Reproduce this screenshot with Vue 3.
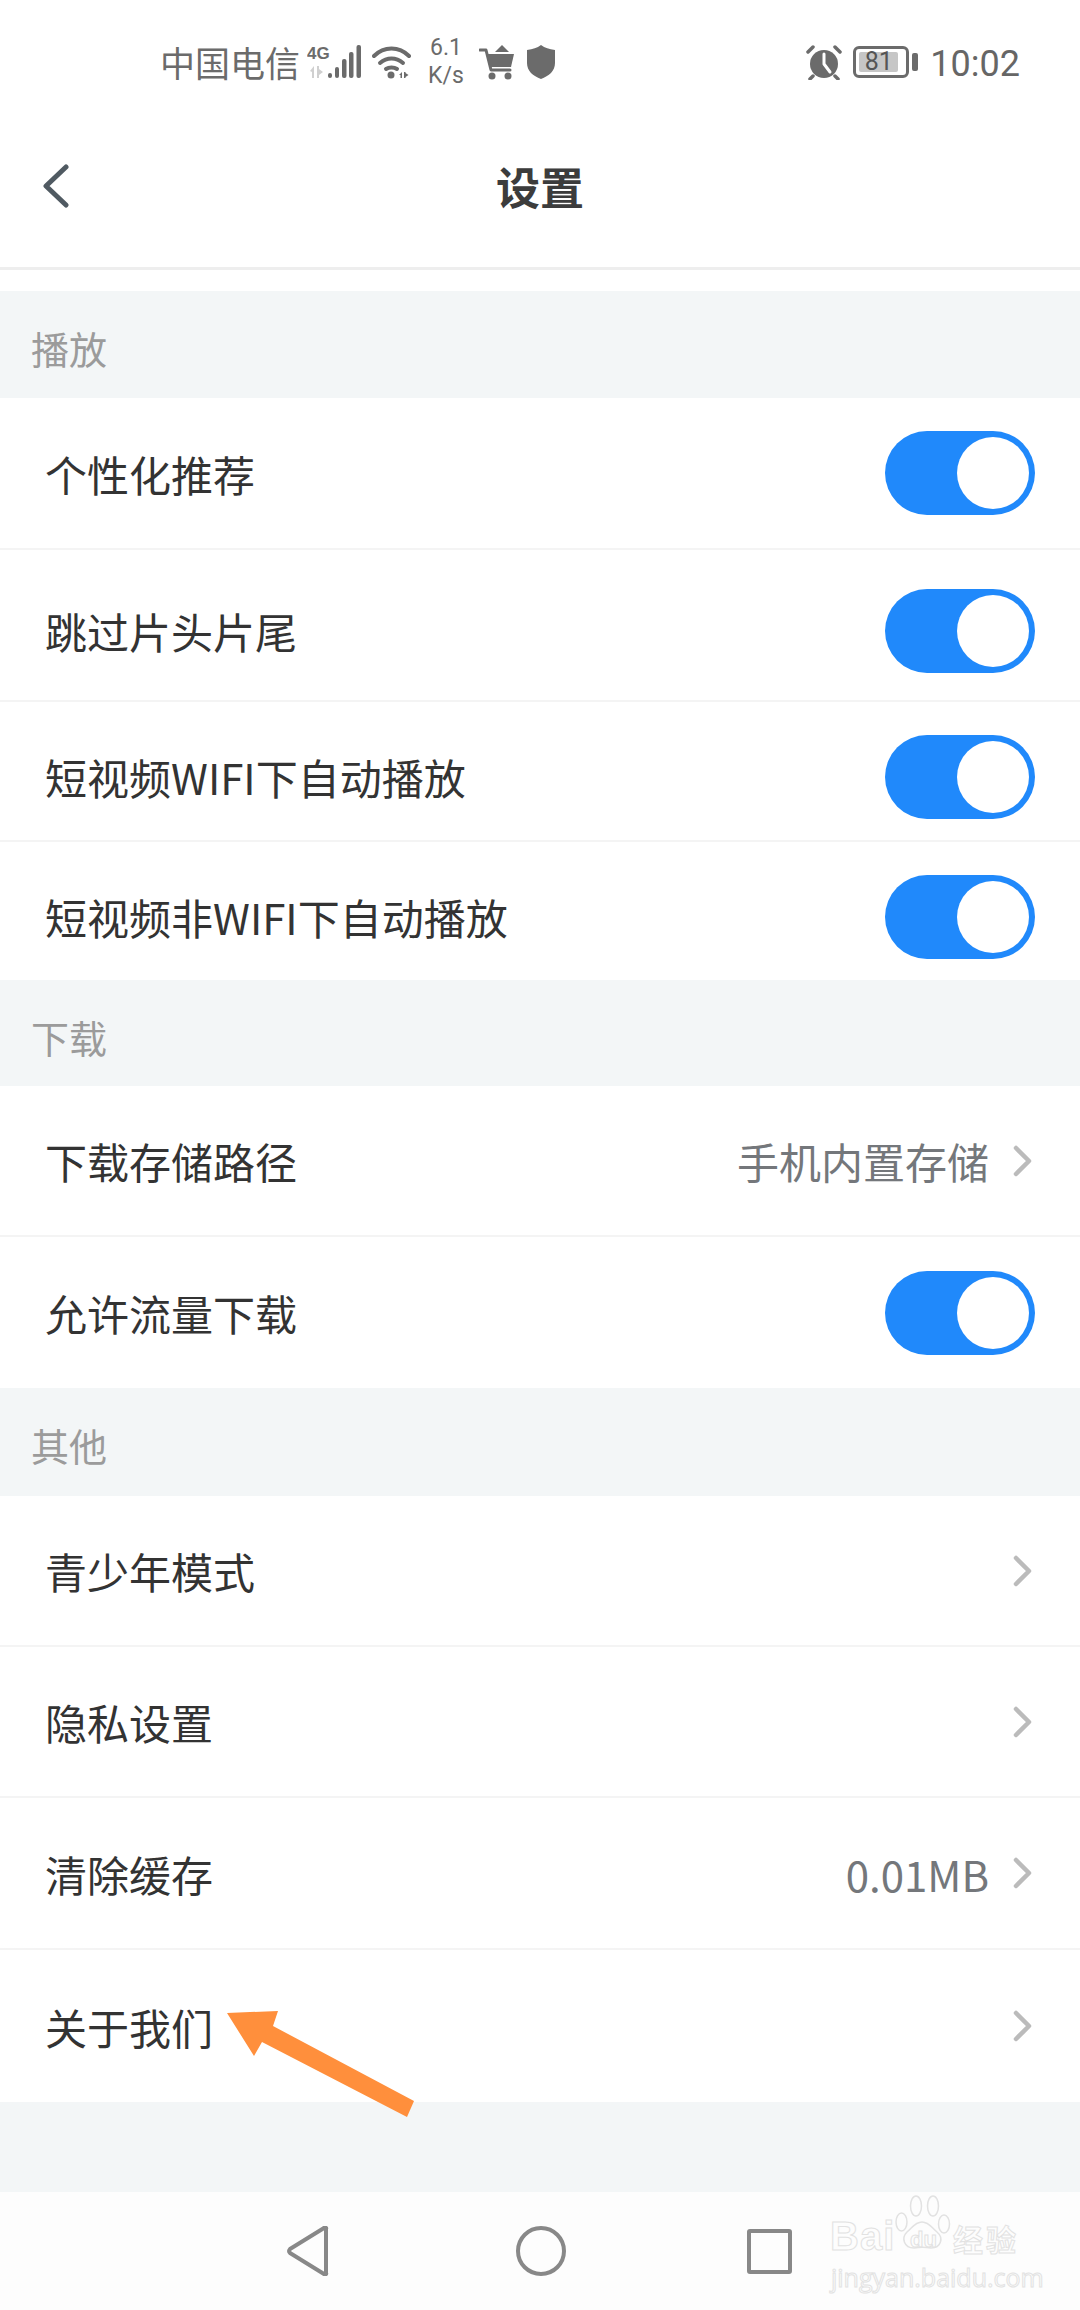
<script setup>
const sections = [
  {
    title: '播放',
    h: 107,
    rows: [
      { label: '个性化推荐', toggle: true, h: 152 },
      { label: '跳过片头片尾', toggle: true, h: 152, low: true },
      { label: '短视频WIFI下自动播放', toggle: true, h: 140, low: true },
      { label: '短视频非WIFI下自动播放', toggle: true, h: 138, low: true, last: true },
    ],
  },
  {
    title: '下载',
    h: 106,
    rows: [
      { label: '下载存储路径', value: '手机内置存储', h: 151 },
      { label: '允许流量下载', toggle: true, h: 151, last: true },
    ],
  },
  {
    title: '其他',
    h: 108,
    rows: [
      { label: '青少年模式', h: 151 },
      { label: '隐私设置', h: 151 },
      { label: '清除缓存', value: '0.01MB', h: 152 },
      { label: '关于我们', h: 152, last: true },
    ],
  },
]
</script>

<template>
  <div class="page">
    <div class="status">
      <span class="carrier">中国电信</span>
      <svg class="sig" width="56" height="36" viewBox="0 0 56 36">
        <text x="0" y="15" class="g4">4G</text>
        <path d="M3 27l4-5v12H5v-6zM10 22h2v12h-2zM12 25l4 3-4 3z" fill="#d0d0d0" />
        <rect x="21" y="29" width="4" height="5" rx="2" fill="#6b6b6b" />
        <rect x="28" y="23" width="4" height="11" rx="2" fill="#6b6b6b" />
        <rect x="35" y="15" width="4.5" height="19" rx="2" fill="#6b6b6b" />
        <rect x="42" y="8" width="4.5" height="26" rx="2" fill="#6b6b6b" />
        <rect x="49.500" y="1" width="4.500" height="33" rx="2" fill="#6b6b6b" />
      </svg>
      <svg class="wifi" width="40" height="34" viewBox="0 0 40 34">
        <g fill="none" stroke="#6b6b6b" stroke-width="4" stroke-linecap="round">
          <path d="M2 11C12 1 27 1 37 11" />
          <path d="M8 18c7-6 16-6 23 0" />
          <path d="M14 24c3-2 8-2 11 0" />
        </g>
        <circle cx="19" cy="30" r="3.500" fill="#6b6b6b" />
        <path d="M27 30l3-3v6h-1.500v-3zM32 27h1.500v6H32zM33.500 28l3 2-3 2z" fill="#6b6b6b" />
      </svg>
      <div class="speed"><span>6.1</span><span>K/s</span></div>
      <svg class="cart" width="36" height="36" viewBox="0 0 36 36">
        <path d="M1 6h6l5 20h19" fill="none" stroke="#6b6b6b" stroke-width="3" stroke-linecap="round" stroke-linejoin="round" />
        <path d="M8 10h27l-3 13H11z" fill="#6b6b6b" />
        <path d="M16 8l7-7 7 7z" fill="#6b6b6b" />
        <circle cx="13" cy="32" r="3.500" fill="#6b6b6b" />
        <circle cx="29" cy="32" r="3.500" fill="#6b6b6b" />
      </svg>
      <svg class="shield" width="28" height="34" viewBox="0 0 28 34">
        <path d="M14 0c4 3 8 4 14 5v13c0 8-6 13-14 16C6 31 0 26 0 18V5c6-1 10-2 14-5z" fill="#6b6b6b" />
      </svg>
      <div class="status-right">
        <svg width="38" height="36" viewBox="0 0 38 36">
          <circle cx="19" cy="20" r="14" fill="#6b6b6b" />
          <path d="M19 10v10l6 8" fill="none" stroke="#fff" stroke-width="3" stroke-linecap="round" stroke-linejoin="round" />
          <path d="M3 8l5-5M35 8l-5-5M8 32l-3 3M30 32l3 3" stroke="#6b6b6b" stroke-width="3.500" stroke-linecap="round" />
        </svg>
        <div class="battery">
          <div class="battery-fill">81</div>
        </div>
        <div class="battery-nub"></div>
        <span class="time">10:02</span>
      </div>
    </div>

    <div class="nav">
      <svg class="back" width="28" height="44" viewBox="0 0 28 44">
        <path d="M24 3L4 22l20 19" fill="none" stroke="#505a62" stroke-width="5" stroke-linecap="round" stroke-linejoin="round" />
      </svg>
      <span class="title">设置</span>
    </div>

    <div class="gap"></div>

    <template v-for="sec in sections" :key="sec.title">
      <div class="section-title" :style="{ height: sec.h + 'px' }">{{ sec.title }}</div>
      <div
        v-for="row in sec.rows"
        :key="row.label"
        class="row"
        :class="{ low: row.low, last: row.last }"
        :style="{ height: row.h + 'px' }"
      >
        <span class="label">{{ row.label }}</span>
        <div v-if="row.toggle" class="toggle"><div class="knob"></div></div>
        <div v-else class="right">
          <span v-if="row.value" class="value">{{ row.value }}</span>
          <svg class="chev" width="19" height="32" viewBox="0 0 19 32">
            <path d="M3 3l13 13L3 29" fill="none" stroke="#bbbbbb" stroke-width="4.500" stroke-linecap="round" stroke-linejoin="round" />
          </svg>
        </div>
      </div>
    </template>

    <div class="footer-space"></div>

    <div class="softkeys">
      <svg class="key-back" width="43" height="50" viewBox="0 0 43 50">
        <path d="M39 3v44a1 1 0 0 1-2 1L3 27a3 3 0 0 1 0-4L37 2a1 1 0 0 1 2 1z" fill="none" stroke="#888" stroke-width="4" stroke-linejoin="round" />
      </svg>
      <div class="key-home"></div>
      <div class="key-recent"></div>
    </div>

    <div class="watermark">
      <span class="wm-bai">Bai</span>
      <svg class="paw" width="58" height="58" viewBox="0 0 58 58">
        <g fill="none" stroke="#e2e2e2" stroke-width="1.500">
          <ellipse cx="6.500" cy="28" rx="5.500" ry="9" />
          <ellipse cx="21" cy="12" rx="5.500" ry="10" />
          <ellipse cx="38" cy="12" rx="5.500" ry="10" />
          <ellipse cx="49" cy="30" rx="5.500" ry="9" />
          <path d="M27 28c7 0 10 6 15 10 7 6 4 16-6 16-6-1-11-1-17 0-10 0-13-10-7-16 5-4 8-10 15-10z" />
        </g>
      </svg>
      <span class="wm-du">du</span>
      <span class="wm-cn">经验</span>
      <div class="wm-url">jingyan.baidu.com</div>
    </div>

    <svg class="arrow" width="440" height="130" viewBox="0 0 440 130">
      <path d="M0 15L51 13L46 28L187 103L180 119L35 44L27 58Z" fill="#ff8f3c" />
    </svg>
  </div>
</template>

<style scoped>
.page {
  position: relative;
  width: 1080px;
  height: 2310px;
  overflow: hidden;
  background: #fff;
  font-family: "Noto Sans CJK SC", "Noto Sans", sans-serif;
  color: #333;
}

.status {
  display: flex;
  align-items: center;
  height: 124px;
  padding-left: 160px;
  padding-right: 60px;
  color: #6b6b6b;
  box-sizing: border-box;
}
.carrier {
  margin-bottom: 2px;
  font-size: 35px;
  width: 140px;
  white-space: nowrap;
}
.sig {
  margin-left: 7px;
}
.g4 {
  font-family: "Liberation Sans", sans-serif;
  font-size: 17px;
  font-weight: 700;
  fill: #6b6b6b;
}
.wifi {
  margin-left: 9px;
}
.speed {
  display: flex;
  flex-direction: column;
  align-items: center;
  margin-left: 14px;
  width: 40px;
  font-family: Roboto, sans-serif;
  font-size: 23px;
  line-height: 28px;
}
.cart {
  margin-left: 13px;
}
.shield {
  margin-left: 12px;
}
.status-right {
  display: flex;
  align-items: center;
  margin-left: auto;
}
.battery {
  margin-left: 10px;
  width: 56px;
  height: 32px;
  box-sizing: border-box;
  border: 3px solid #6b6b6b;
  border-radius: 6px;
  padding: 3px;
}
.battery-fill {
  width: 39px;
  height: 20px;
  background: #c6c6c6;
  border-radius: 2px;
  font-family: Roboto, sans-serif;
  font-size: 25px;
  line-height: 20px;
  text-align: center;
  color: #555;
}
.battery-nub {
  width: 6px;
  height: 18px;
  margin-left: 3px;
  background: #6b6b6b;
  border-radius: 2px;
}
.time {
  margin-left: 12px;
  margin-top: 3px;
  font-family: Roboto, sans-serif;
  font-size: 36px;
  color: #666;
}

.nav {
  position: relative;
  display: flex;
  align-items: center;
  justify-content: center;
  height: 146px;
  padding-bottom: 20px;
  box-sizing: border-box;
  border-bottom: 3px solid #eeeeee;
}
.back {
  position: absolute;
  left: 42px;
  top: 40px;
}
.title {
  font-size: 44px;
  font-weight: 700;
  color: #3c3c3c;
}
.gap {
  height: 21px;
}

.section-title {
  line-height: 113px;
  padding-left: 31px;
  background: #f3f6f7;
  font-size: 38px;
  color: #9b9b9b;
}

.row {
  display: flex;
  align-items: center;
  justify-content: space-between;
  box-sizing: border-box;
  padding: 0 45px;
  background: #fff;
  border-bottom: 2px solid #f4f4f4;
}
.row.low {
  padding-top: 11px;
}
.row.last {
  border-bottom: none;
}
.label {
  font-size: 42px;
  color: #333;
}
.toggle {
  position: relative;
  flex: none;
  width: 150px;
  height: 84px;
  border-radius: 42px;
  background: #2089fb;
}
.knob {
  position: absolute;
  right: 6px;
  top: 6px;
  width: 72px;
  height: 72px;
  border-radius: 50%;
  background: #fff;
}
.right {
  display: flex;
  align-items: center;
  gap: 24px;
}
.value {
  font-size: 42px;
  color: #74777b;
}
.chev {
  margin-right: 3px;
}

.footer-space {
  height: 90px;
  background: #f3f6f7;
}
.softkeys {
  display: flex;
  align-items: center;
  height: 118px;
  padding-left: 287px;
  box-sizing: border-box;
  background: #fdfdfd;
}
.key-home {
  width: 50px;
  height: 50px;
  margin-left: 186px;
  box-sizing: border-box;
  border: 4px solid #888;
  border-radius: 50%;
}
.key-recent {
  width: 45px;
  height: 45px;
  margin-left: 181px;
  box-sizing: border-box;
  border: 4px solid #888;
  border-radius: 3px;
}

.watermark {
  position: absolute;
  left: 830px;
  top: 2194px;
  width: 194px;
  height: 100px;
  color: transparent;
  -webkit-text-stroke: 1px #e2e2e2;
  font-family: "Liberation Sans", sans-serif;
  white-space: nowrap;
}
.wm-bai {
  position: absolute;
  left: 0;
  top: 22px;
  font-size: 40px;
  font-weight: 700;
  line-height: 40px;
  letter-spacing: 1px;
}
.paw {
  position: absolute;
  left: 65px;
  top: 0;
}
.wm-du {
  position: absolute;
  left: 80px;
  top: 32px;
  font-size: 22px;
  font-weight: 700;
  line-height: 28px;
}
.wm-cn {
  position: absolute;
  left: 123px;
  top: 26px;
  font-family: "Noto Sans CJK SC", sans-serif;
  font-size: 30px;
  font-weight: 700;
  line-height: 36px;
  letter-spacing: 3px;
}
.wm-url {
  position: absolute;
  left: 1px;
  top: 68px;
  font-family: "Open Sans", sans-serif;
  font-size: 25px;
  line-height: 30px;
}

.arrow {
  position: absolute;
  left: 227px;
  top: 1998px;
}
</style>
